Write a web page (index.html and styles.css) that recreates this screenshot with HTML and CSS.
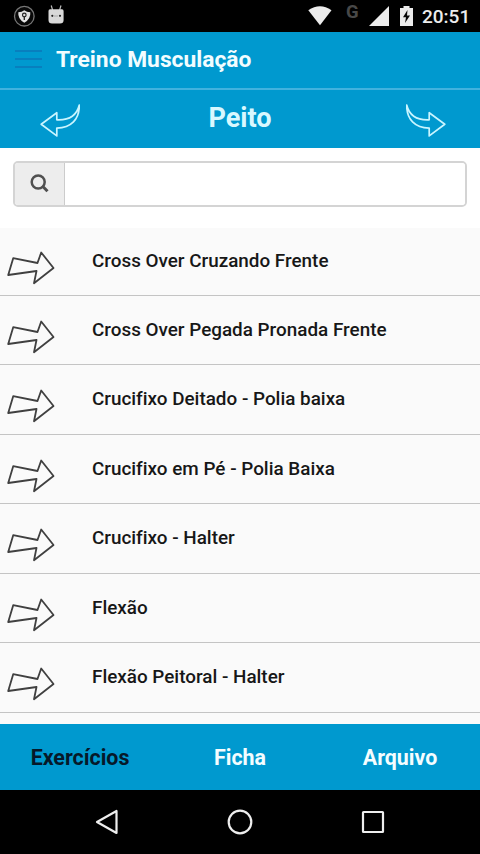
FILE: index.html
```html
<!DOCTYPE html>
<html lang="pt-BR">
<head>
<meta charset="utf-8">
<title>Treino Musculação</title>
<link rel="stylesheet" href="styles.css">
</head>
<body>
<svg class="defs" width="0" height="0" aria-hidden="true">
  <symbol id="arrow" viewBox="0 0 56 48"><path d="M13.2 14.2 37.5 19 41.2 8.500 53.5 24 34 39.2 36.5 27 8.2 31Z" fill="none" stroke="#404040" stroke-width="1.8" stroke-linejoin="round"/></symbol>
</svg>
<div class="screen">
  <div class="status">
    <svg class="status-left" width="80" height="32" viewBox="0 0 80 32">
      <circle cx="24.3" cy="16.2" r="9.8" fill="#080808" stroke="#777" stroke-width="1.3"/>
      <path d="M18.3 12.3Q22 12.2 24.3 10.2 26.7 12.2 30.3 12.3 31 19 24.3 22.8 17.6 19 18.3 12.3Z" fill="#e4e4e4"/>
      <circle cx="24.3" cy="15" r="1.8" fill="#ddd" stroke="#222" stroke-width="1.2"/>
      <path d="M24.3 16.5V20" stroke="#222" stroke-width="1.3"/>
      <path d="M51.2 5.5 52.6 10M61 5.5 59.6 10" stroke="#bbb" stroke-width="1.2"/>
      <path d="M50 9.2H62Q63.6 9.2 63.6 11V20Q63.6 23.6 60 23.6H52Q48.5 23.6 48.5 20V11Q48.5 9.2 50 9.2Z" fill="#d9d9d9"/>
      <circle cx="52.3" cy="15.8" r="1.1" fill="#222"/><circle cx="60" cy="15.8" r="1.1" fill="#222"/>
      <path d="M54 16H58" stroke="#aaa"/>
    </svg>
    <div class="status-right">
      <svg width="24" height="32" viewBox="0 0 24 32"><path d="M.3 10.2Q12 2.2 23.5 10.2L12 25.3Z" fill="#ececec"/></svg>
      <span class="net">G</span>
      <svg class="signal" width="20" height="32" viewBox="0 0 20 32"><path d="M0 26 20 6V26Z" fill="#ececec"/></svg>
      <svg class="battery" width="13" height="32" viewBox="0 0 13 32"><path d="M0 8H3.5V6H9.5V8H13V26H0Z" fill="#ececec"/><path d="M7.5 10 3 17.2H6L5 23 10 15.5H7Z" fill="#080808"/></svg>
      <span class="clock">20:51</span>
    </div>
  </div>
  <header class="topbar">
    <div class="menu"><i></i><i></i><i></i></div>
    <h1>Treino Musculação</h1>
  </header>
  <div class="groupbar">
    <svg width="40" height="34" viewBox="0 0 40 34"><path d="M1.2 20.2 16.8 8.7V15.8C27 16.3 36.5 12.5 39.3 1 39.5 15.5 31 24 16.8 24.1V31.9Z" fill="none" stroke="#c9f5ff" stroke-width="1.7" stroke-linejoin="round"/></svg>
    <h2>Peito</h2>
    <svg width="40" height="34" viewBox="0 0 40 34"><path d="M38.8 20.2 23.2 8.7V15.8C13 16.3 3.5 12.5 .7 1 .5 15.5 9 24 23.2 24.1V31.9Z" fill="none" stroke="#c9f5ff" stroke-width="1.7" stroke-linejoin="round"/></svg>
  </div>
  <div class="searchwrap">
    <div class="search">
      <div class="addon"><svg width="20" height="20" viewBox="0 0 20 20" fill="none" stroke="#505050"><circle cx="8.2" cy="8" r="6.5" stroke-width="2.5"/><path d="M12.6 12.3 17.5 17.2" stroke-width="3"/></svg></div>
      <input type="text" aria-label="Buscar">
    </div>
  </div>
  <ul class="list">
    <li><svg><use href="#arrow"/></svg><span>Cross Over Cruzando Frente</span></li>
    <li><svg><use href="#arrow"/></svg><span>Cross Over Pegada Pronada Frente</span></li>
    <li><svg><use href="#arrow"/></svg><span>Crucifixo Deitado - Polia baixa</span></li>
    <li><svg><use href="#arrow"/></svg><span>Crucifixo em Pé - Polia Baixa</span></li>
    <li><svg><use href="#arrow"/></svg><span>Crucifixo - Halter</span></li>
    <li><svg><use href="#arrow"/></svg><span>Flexão</span></li>
    <li><svg><use href="#arrow"/></svg><span>Flexão Peitoral - Halter</span></li>
  </ul>
  <nav class="tabs"><span class="active">Exercícios</span><span>Ficha</span><span>Arquivo</span></nav>
  <div class="sysnav">
    <svg width="28" height="28" viewBox="0 0 28 28"><path d="M4 14 23.5 3V25Z"/></svg>
    <svg width="28" height="28" viewBox="0 0 28 28"><circle cx="14" cy="14" r="11.3"/></svg>
    <svg width="28" height="28" viewBox="0 0 28 28"><rect x="4" y="4" width="20" height="20" rx=".5"/></svg>
  </div>
</div>
</body>
</html>
```
FILE: styles.css
```css
* { box-sizing: border-box; }
body { margin: 0; font-family: Roboto, "Liberation Sans", sans-serif; font-variant-ligatures: none; background: #000; }
svg { display: block; flex: none; }
h1, h2 { margin: 0; font-weight: 700; }
.defs { position: absolute; }
.screen { width: 480px; height: 854px; display: flex; flex-direction: column; overflow: hidden; background: #fff; }
.status { height: 32px; flex: none; background: #000; display: flex; justify-content: space-between; }
.status-right { display: flex; padding-right: 10px; color: #ececec; }
.net { width: 13px; margin-left: 14px; font-size: 18.5px; font-weight: 700; line-height: 24px; color: #484848; }
.signal { margin-left: 10px; }
.battery { margin-left: 11px; }
.clock { width: 48px; margin-left: 9px; font-size: 19px; font-weight: 500; line-height: 34px; white-space: nowrap; }
.topbar { height: 58px; flex: none; background: #0099cf; border-bottom: 2px solid #42b2de; display: flex; align-items: center; padding-left: 15px; }
.menu { width: 27px; height: 18px; margin-bottom: 2px; display: flex; flex-direction: column; justify-content: space-between; }
.menu i { height: 2px; background: #087fbe; }
.topbar h1 { margin-left: 14px; font-size: 22.8px; line-height: 28px; color: #f2fdff; }
.groupbar { height: 58px; flex: none; background: #0099cf; display: flex; justify-content: space-between; padding: 14px 34px 0 40px; }
.groupbar h2 { margin-right: 6px; font-size: 27.1px; line-height: 28px; color: #d8f8ff; }
.searchwrap { height: 80px; flex: none; padding: 13px 13px 0; }
.search { height: 46px; display: flex; border: 2px solid #d4d4d4; border-radius: 5px; overflow: hidden; }
.addon { width: 50px; background: #ededed; border-right: 1px solid #ccc; display: flex; align-items: center; justify-content: center; }
.search input { flex: 1; border: 0; background: #fff; outline: 0; }
.list { flex: 1; min-height: 0; margin: 0; padding: 0; list-style: none; background: #fafafa; overflow: hidden; }
.list li { height: 69.45px; display: flex; border-bottom: 1px solid #c4c4c4; padding-top: 17px; }
.list li:first-child { height: 68px; padding-top: 16px; }
.list svg { width: 56px; height: 48px; }
.list span { margin-left: 36px; font-size: 18.88px; font-weight: 500; line-height: 34px; color: #171717; white-space: nowrap; }
.tabs { height: 66px; flex: none; background: #0099cf; display: grid; grid-template-columns: repeat(3, 1fr); text-align: center; font-size: 21.4px; font-weight: 700; line-height: 67px; color: #f4fdff; }
.tabs .active { color: #06192a; }
.sysnav { height: 64px; flex: none; background: #000; display: flex; justify-content: space-between; align-items: center; padding: 0 93px; }
.sysnav svg { fill: none; stroke: #eee; stroke-width: 2.2; stroke-linejoin: round; }
```
